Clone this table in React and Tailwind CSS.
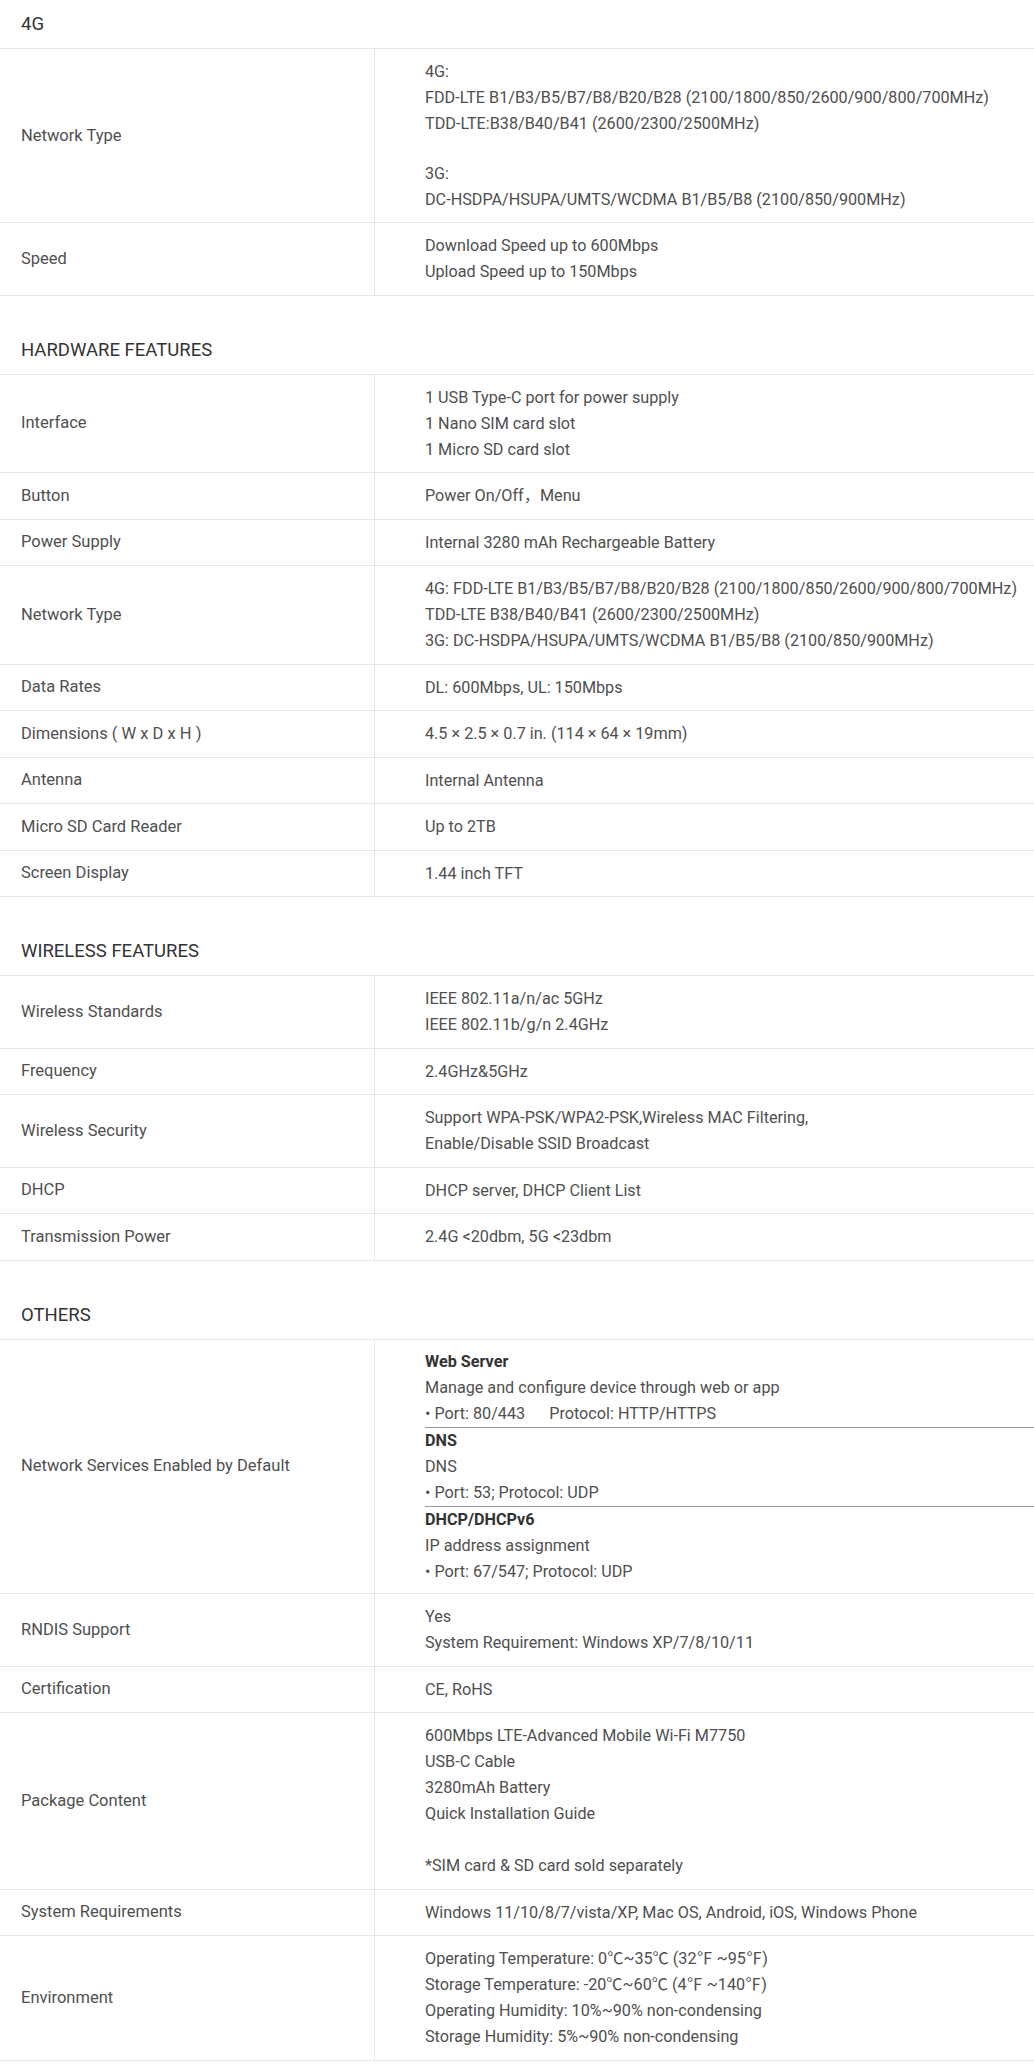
import React from "react";

const sections = [
  {
    title: "4G",
    rows: [
      {
        label: "Network Type",
        tightBlank: true,
        lines: [
          "4G:",
          "FDD-LTE B1/B3/B5/B7/B8/B20/B28 (2100/1800/850/2600/900/800/700MHz)",
          "TDD-LTE:B38/B40/B41 (2600/2300/2500MHz)",
          "",
          "3G:",
          "DC-HSDPA/HSUPA/UMTS/WCDMA B1/B5/B8 (2100/850/900MHz)",
        ],
      },
      { label: "Speed", lines: ["Download Speed up to 600Mbps", "Upload Speed up to 150Mbps"] },
    ],
  },
  {
    title: "HARDWARE FEATURES",
    rows: [
      {
        label: "Interface",
        lines: ["1 USB Type-C port for power supply", "1 Nano SIM card slot", "1 Micro SD card slot"],
      },
      { label: "Button", lines: ["Power On/Off，Menu"] },
      { label: "Power Supply", lines: ["Internal 3280 mAh Rechargeable Battery"] },
      {
        label: "Network Type",
        lines: [
          "4G: FDD-LTE B1/B3/B5/B7/B8/B20/B28 (2100/1800/850/2600/900/800/700MHz)",
          "TDD-LTE B38/B40/B41 (2600/2300/2500MHz)",
          "3G: DC-HSDPA/HSUPA/UMTS/WCDMA B1/B5/B8 (2100/850/900MHz)",
        ],
      },
      { label: "Data Rates", lines: ["DL: 600Mbps, UL: 150Mbps"] },
      { label: "Dimensions ( W x D x H )", lines: ["4.5 × 2.5 × 0.7 in. (114 × 64 × 19mm)"] },
      { label: "Antenna", lines: ["Internal Antenna"] },
      { label: "Micro SD Card Reader", lines: ["Up to 2TB"] },
      { label: "Screen Display", lines: ["1.44 inch TFT"] },
    ],
  },
  {
    title: "WIRELESS FEATURES",
    rows: [
      { label: "Wireless Standards", lines: ["IEEE 802.11a/n/ac 5GHz", "IEEE 802.11b/g/n 2.4GHz"] },
      { label: "Frequency", lines: ["2.4GHz&5GHz"] },
      {
        label: "Wireless Security",
        lines: ["Support WPA-PSK/WPA2-PSK,Wireless MAC Filtering,", "Enable/Disable SSID Broadcast"],
      },
      { label: "DHCP", lines: ["DHCP server, DHCP Client List"] },
      { label: "Transmission Power", lines: ["2.4G <20dbm, 5G <23dbm"] },
    ],
  },
  {
    title: "OTHERS",
    rows: [
      { label: "Network Services Enabled by Default", services: true },
      { label: "RNDIS Support", lines: ["Yes", "System Requirement: Windows XP/7/8/10/11"] },
      { label: "Certification", lines: ["CE, RoHS"] },
      {
        label: "Package Content",
        lines: [
          "600Mbps LTE-Advanced Mobile Wi-Fi M7750",
          "USB-C Cable",
          "3280mAh Battery",
          "Quick Installation Guide",
          "",
          "*SIM card & SD card sold separately",
        ],
      },
      {
        label: "System Requirements",
        lines: ["Windows 11/10/8/7/vista/XP, Mac OS, Android, iOS, Windows Phone"],
      },
      {
        label: "Environment",
        lines: [
          "Operating Temperature: 0℃~35℃ (32℉ ~95℉)",
          "Storage Temperature: -20℃~60℃ (4℉ ~140℉)",
          "Operating Humidity: 10%~90% non-condensing",
          "Storage Humidity: 5%~90% non-condensing",
        ],
      },
    ],
  },
];

const services = [
  {
    name: "Web Server",
    desc: "Manage and configure device through web or app",
    port: "• Port: 80/443\u00a0\u00a0\u00a0\u00a0\u00a0\u00a0Protocol: HTTP/HTTPS",
    border: true,
  },
  { name: "DNS", desc: "DNS", port: "• Port: 53; Protocol: UDP", border: true },
  { name: "DHCP/DHCPv6", desc: "IP address assignment", port: "• Port: 67/547; Protocol: UDP", border: false },
];

function Services() {
  return (
    <div className="flex flex-col">
      {services.map((s) => (
        <div key={s.name} className={s.border ? "border-b border-[#9a9a9a]" : ""}>
          <div className="font-bold text-[#333333]">{s.name}</div>
          <div>{s.desc}</div>
          <div className="whitespace-nowrap">{s.port}</div>
        </div>
      ))}
    </div>
  );
}

function Row({ row }) {
  return (
    <div className="flex border-b border-[#e6e6e6]">
      <div className="w-[374px] shrink-0 flex items-center pl-[21px] text-[16.5px]">{row.label}</div>
      <div
        className={
          row.services
            ? "flex-1 border-l border-[#e6e6e6] pl-[50px] pt-[9px] pb-[8.5px]"
            : "flex-1 border-l border-[#e6e6e6] pl-[50px] pt-[10px] pb-[9.5px]"
        }
      >
        {row.services ? (
          <Services />
        ) : (
          row.lines.map((l, k) =>
            l === "" ? (
              <div key={k} className={row.tightBlank ? "h-[23.5px]" : "h-[26px]"} />
            ) : (
              <div key={k} className="h-[26px] whitespace-nowrap">
                {l}
              </div>
            )
          )
        )}
      </div>
    </div>
  );
}

export default function App() {
  return (
    <div
      className="w-full bg-white text-[16.2px] leading-[26px] text-[#4f4f4f] pb-[10px] flex flex-col gap-[30px]"
      style={{ fontFamily: "Roboto, 'Noto Sans CJK SC', sans-serif" }}
    >
      {sections.map((sec) => (
        <section key={sec.title} className="flex flex-col">
          <div className="border-b border-[#e6e6e6] pl-[21px] pt-[11px] pb-[11px] text-[18.5px] text-[#333333]">
            {sec.title}
          </div>
          {sec.rows.map((r) => (
            <Row key={sec.title + r.label} row={r} />
          ))}
        </section>
      ))}
    </div>
  );
}
